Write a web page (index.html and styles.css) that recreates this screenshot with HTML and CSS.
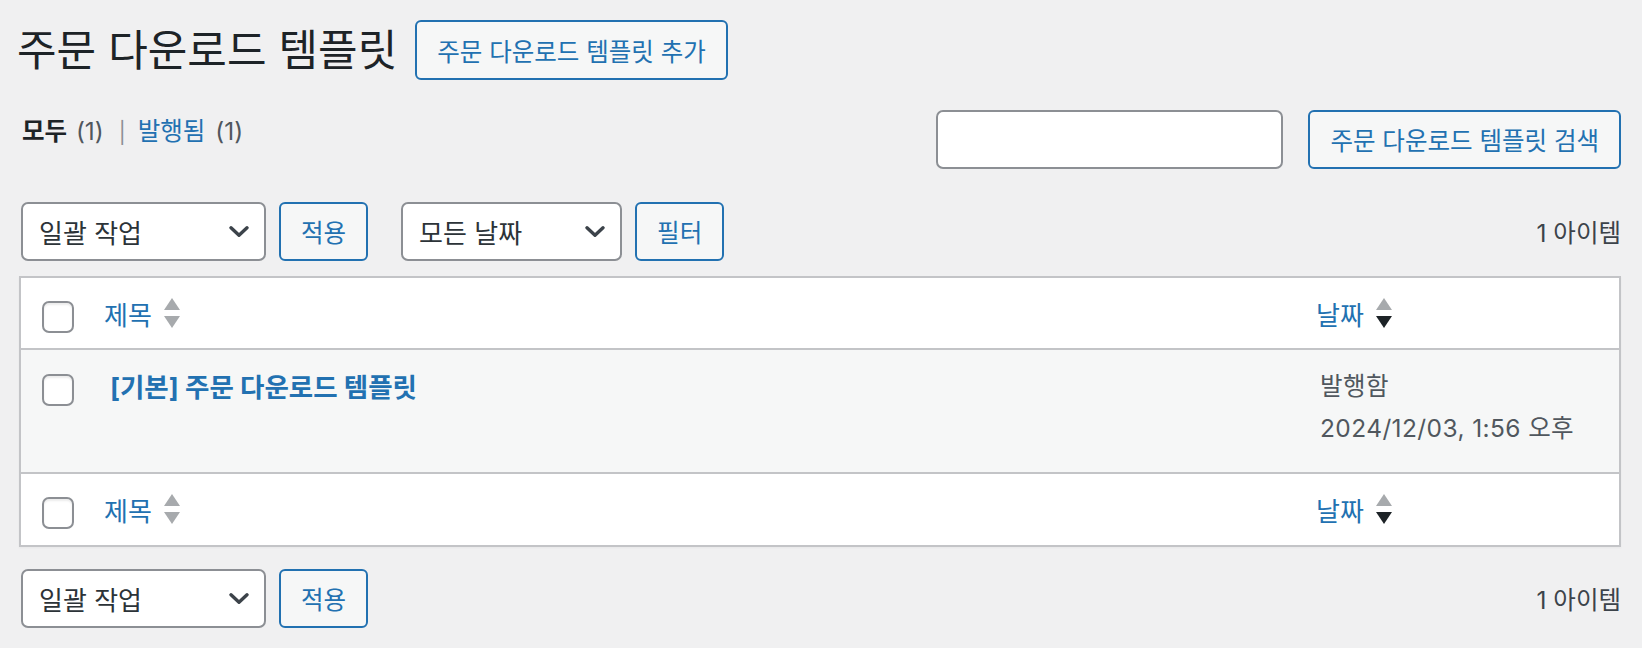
FILE: index.html
```html
<!DOCTYPE html>
<html lang="ko">
<head>
<meta charset="utf-8">
<title>주문 다운로드 템플릿</title>
<link rel="stylesheet" href="styles.css">
</head>
<body>
<div class="wrap">
  <div class="title-row">
    <h1 class="page-title">주문 다운로드 템플릿</h1>
    <a class="btn add-btn" href="#">주문 다운로드 템플릿 추가</a>
  </div>

  <div class="filter-row">
    <ul class="subsubsub">
      <li><a class="current" href="#">모두 <span class="count">(1)</span></a><span class="sep">|</span></li>
      <li><a href="#">발행됨 <span class="count">(1)</span></a></li>
    </ul>
    <div class="search-box">
      <input class="search-input" type="search" aria-label="검색">
      <a class="btn" href="#">주문 다운로드 템플릿 검색</a>
    </div>
  </div>

  <div class="tablenav top">
    <div class="select bulk"><span>일괄 작업</span>
      <svg class="chev" viewBox="0 0 20 11" width="20" height="11"><polyline points="2,1.8 10,9.2 18,1.8" fill="none" stroke="#3c434a" stroke-width="3.4" stroke-linecap="round" stroke-linejoin="round"/></svg>
    </div>
    <a class="btn small" href="#">적용</a>
    <div class="select dates"><span>모든 날짜</span>
      <svg class="chev" viewBox="0 0 20 11" width="20" height="11"><polyline points="2,1.8 10,9.2 18,1.8" fill="none" stroke="#3c434a" stroke-width="3.4" stroke-linecap="round" stroke-linejoin="round"/></svg>
    </div>
    <a class="btn small" href="#">필터</a>
    <span class="displaying-num">1 아이템</span>
  </div>

  <div class="list-table">
    <div class="trow thead">
      <div class="cb"><span class="checkbox"></span></div>
      <div class="col-title"><a class="sort" href="#">제목<svg class="sort-ind" viewBox="0 0 16 30" width="16" height="30"><polygon points="8,0 16,12 0,12" fill="#a7aaad"/><polygon points="0,18 16,18 8,30" fill="#a7aaad"/></svg></a></div>
      <div class="col-date"><a class="sort" href="#">날짜<svg class="sort-ind" viewBox="0 0 16 30" width="16" height="30"><polygon points="8,0 16,12 0,12" fill="#a7aaad"/><polygon points="0,18 16,18 8,30" fill="#1d2327"/></svg></a></div>
    </div>
    <div class="trow tbody-row">
      <div class="cb"><span class="checkbox"></span></div>
      <div class="col-title"><a class="row-title" href="#">[기본] 주문 다운로드 템플릿</a></div>
      <div class="col-date date-cell">발행함<br>2024/12/03, 1:56 오후</div>
    </div>
    <div class="trow tfoot">
      <div class="cb"><span class="checkbox"></span></div>
      <div class="col-title"><a class="sort" href="#">제목<svg class="sort-ind" viewBox="0 0 16 30" width="16" height="30"><polygon points="8,0 16,12 0,12" fill="#a7aaad"/><polygon points="0,18 16,18 8,30" fill="#a7aaad"/></svg></a></div>
      <div class="col-date"><a class="sort" href="#">날짜<svg class="sort-ind" viewBox="0 0 16 30" width="16" height="30"><polygon points="8,0 16,12 0,12" fill="#a7aaad"/><polygon points="0,18 16,18 8,30" fill="#1d2327"/></svg></a></div>
    </div>
  </div>

  <div class="tablenav bottom">
    <div class="select bulk"><span>일괄 작업</span>
      <svg class="chev" viewBox="0 0 20 11" width="20" height="11"><polyline points="2,1.8 10,9.2 18,1.8" fill="none" stroke="#3c434a" stroke-width="3.4" stroke-linecap="round" stroke-linejoin="round"/></svg>
    </div>
    <a class="btn small" href="#">적용</a>
    <span class="displaying-num">1 아이템</span>
  </div>
</div>
</body>
</html>
```

FILE: styles.css
```css
* { box-sizing: border-box; }

html, body {
  margin: 0;
  padding: 0;
  background: #f0f0f1;
}

body {
  font-family: Inter, "Noto Sans CJK KR", sans-serif;
  font-size: 24.5px;
  color: #3c434a;
}

a { text-decoration: none; color: #2271b1; }

.wrap {
  padding: 20px 21px 0 19px;
}

/* title */
.title-row {
  display: flex;
  align-items: center;
  height: 60px;
}

.page-title {
  margin: 0 0 0 -2px;
  font-size: 43px;
  font-weight: 400;
  line-height: 60px;
  color: #1d2327;
}

.btn {
  display: inline-flex;
  align-items: center;
  height: 59px;
  padding: 0 20px;
  border: 2px solid #2271b1;
  border-radius: 6px;
  background: #f6f7f7;
  color: #2271b1;
  font-size: 24.5px;
  white-space: nowrap;
}

.add-btn {
  height: 60px;
  margin-left: 18px;
}

/* subsubsub + search */
.filter-row {
  display: flex;
  justify-content: space-between;
  align-items: flex-start;
  margin-top: 30px;
}

.subsubsub {
  display: flex;
  list-style: none;
  margin: 0;
  padding: 0 0 0 3px;
  line-height: 42px;
  color: #646970;
}

.subsubsub a { color: #2271b1; }
.subsubsub a.current { color: #1d2327; font-weight: 700; }
.subsubsub .count { margin-left: 3px; color: #50575e; font-weight: 400; }
.subsubsub .sep {
  display: inline-block;
  margin: 0 12px 0 15px;
  color: #8c8f94;
  font-size: 21px;
}

.search-box {
  display: flex;
  gap: 25px;
}

.search-input {
  width: 347px;
  height: 59px;
  margin: 0;
  border: 2px solid #8c8f94;
  border-radius: 7px;
  background: #fff;
  font: inherit;
}

/* tablenav */
.tablenav {
  display: flex;
  align-items: center;
  height: 59px;
}

.tablenav.top { margin-top: 33px; }
.tablenav.bottom { margin-top: 22px; }

.select {
  display: flex;
  align-items: center;
  justify-content: space-between;
  height: 59px;
  padding: 0 15px 0 16px;
  border: 2px solid #8c8f94;
  border-radius: 7px;
  background: #fff;
  font-size: 26px;
  color: #2c3338;
}

.select.bulk { width: 245px; margin-left: 2px; }
.select.dates { width: 221px; margin-left: 33px; }

.chev { display: block; }

.btn.small { margin-left: 13px; padding: 0 20px; }

.displaying-num {
  margin-left: auto;
  color: #3c434a;
}

/* table */
.list-table {
  margin-top: 15px;
  border: 2px solid #c3c4c7;
  background: #fff;
  box-shadow: 0 1px 2px rgba(0, 0, 0, 0.04);
}

.trow {
  display: grid;
  grid-template-columns: 83px 1fr 316px;
}

.thead, .tfoot {
  height: 72px;
  align-items: start;
}

.thead { border-bottom: 2px solid #c3c4c7; }
.tfoot { border-top: 2px solid #c3c4c7; height: 73px; }

.tbody-row {
  height: 122px;
  background: #f6f7f7;
}

.cb { padding: 23px 0 0 21px; }
.tbody-row .cb { padding-top: 24px; }

.checkbox {
  display: block;
  width: 32px;
  height: 32px;
  border: 2px solid #8c8f94;
  border-radius: 7px;
  background: #fff;
  box-shadow: inset 0 2px 2px rgba(0, 0, 0, 0.08);
}

.sort {
  display: inline-flex;
  align-items: center;
  height: 70px;
  font-size: 26px;
  color: #2271b1;
}

.sort-ind { display: block; margin-left: 12px; }

.thead .col-date, .tfoot .col-date { padding-left: 13px; }

.row-title {
  display: block;
  padding: 20px 0 0 6px;
  font-size: 26.5px;
  line-height: 34px;
  font-weight: 700;
  color: #2271b1;
}

.date-cell {
  padding: 15px 0 0 17px;
  line-height: 42px;
  letter-spacing: 0.4px;
  color: #50575e;
}
```
